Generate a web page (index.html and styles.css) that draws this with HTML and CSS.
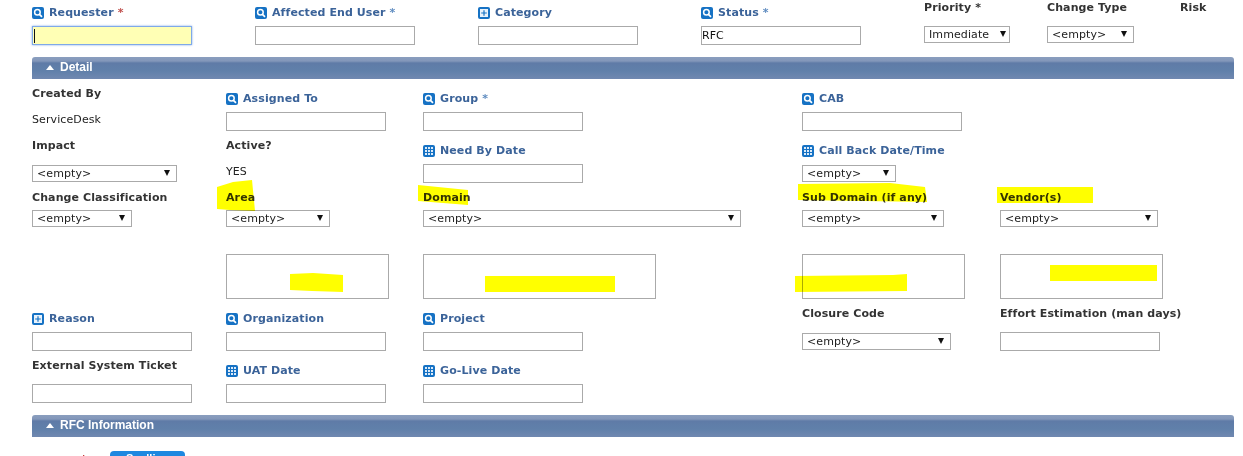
FILE: index.html
```html
<!DOCTYPE html>
<html lang="en">
<head>
<meta charset="utf-8">
<title>Change</title>
<link rel="stylesheet" href="styles.css">
</head>
<body>
<svg class="defs" width="0" height="0" aria-hidden="true">
  <symbol id="i-search" viewBox="0 0 12 12">
    <rect width="12" height="12" rx="2" fill="#1672c4"/>
    <circle cx="5.4" cy="5.2" r="2.8" fill="none" stroke="#fff" stroke-width="1.5"/>
    <path d="M7.4 7.3 10 9.8" stroke="#fff" stroke-width="1.7"/>
  </symbol>
  <symbol id="i-plus" viewBox="0 0 12 12">
    <rect width="12" height="12" rx="2" fill="#1672c4"/>
    <rect x="2" y="2" width="8" height="8" fill="#e8f2fb"/>
    <path d="M6 3.2v5.6M3.2 6h5.6" stroke="#1672c4" stroke-width="1.2"/>
  </symbol>
  <symbol id="i-grid" viewBox="0 0 12 12">
    <rect width="12" height="12" rx="2" fill="#1672c4"/>
    <path d="M2 2h2v2H2zM5 2h2v2H5zM8 2h2v2H8zM2 5h2v2H2zM5 5h2v2H5zM8 5h2v2H8zM2 8h2v2H2zM5 8h2v2H5zM8 8h2v2H8z" fill="#dcebf9"/>
  </symbol>
</svg>

<main class="page">
  <section class="top">
    <div class="field"><div class="lbl link"><svg class="ic"><use href="#i-search"/></svg>Requester <i class="req">*</i></div><input class="in focus" type="text"></div>
    <div class="field"><div class="lbl link"><svg class="ic"><use href="#i-search"/></svg>Affected End User <i>*</i></div><input class="in" type="text"></div>
    <div class="field"><div class="lbl link"><svg class="ic"><use href="#i-plus"/></svg>Category</div><input class="in" type="text"></div>
    <div class="field"><div class="lbl link"><svg class="ic"><use href="#i-search"/></svg>Status <i>*</i></div><input class="in" type="text" value="RFC"></div>
    <div class="field"><div class="lbl">Priority <i class="dark">*</i></div><div class="sel w86 tight"><select><option>Immediate</option></select></div></div>
    <div class="field"><div class="lbl">Change Type</div><div class="sel w87"><select><option>&lt;empty&gt;</option></select></div></div>
    <div class="field"><div class="lbl">Risk</div></div>
  </section>

  <h2 class="bar">Detail</h2>

  <section class="detail">
    <div class="field"><div class="lbl">Created By</div><div class="val">ServiceDesk</div></div>
    <div class="field"><div class="lbl link"><svg class="ic"><use href="#i-search"/></svg>Assigned To</div><input class="in" type="text"></div>
    <div class="field"><div class="lbl link"><svg class="ic"><use href="#i-search"/></svg>Group <i>*</i></div><input class="in" type="text"></div>
    <div class="field"><div class="lbl link"><svg class="ic"><use href="#i-search"/></svg>CAB</div><input class="in" type="text"></div>
    <div></div>

    <div class="field"><div class="lbl tall">Impact</div><div class="sel w145"><select><option>&lt;empty&gt;</option></select></div></div>
    <div class="field"><div class="lbl">Active?</div><div class="val">YES</div></div>
    <div class="field"><div class="lbl link"><svg class="ic"><use href="#i-grid"/></svg>Need By Date</div><input class="in" type="text"></div>
    <div class="field"><div class="lbl link tall"><svg class="ic"><use href="#i-grid"/></svg>Call Back Date/Time</div><div class="sel w94"><select><option>&lt;empty&gt;</option></select></div></div>
    <div></div>

    <div class="field"><div class="lbl short">Change Classification</div><div class="sel w100"><select><option>&lt;empty&gt;</option></select></div></div>
    <div class="field"><div class="lbl short">Area</div><div class="sel w104"><select><option>&lt;empty&gt;</option></select></div></div>
    <div class="field"><div class="lbl short">Domain</div><div class="sel w318"><select><option>&lt;empty&gt;</option></select></div></div>
    <div class="field"><div class="lbl short">Sub Domain (if any)</div><div class="sel w142"><select><option>&lt;empty&gt;</option></select></div></div>
    <div class="field"><div class="lbl short">Vendor(s)</div><div class="sel w158"><select><option>&lt;empty&gt;</option></select></div></div>

    <div></div>
    <textarea class="box w163"></textarea>
    <textarea class="box w233"></textarea>
    <textarea class="box w163"></textarea>
    <textarea class="box w163"></textarea>

    <div class="field"><div class="lbl link"><svg class="ic"><use href="#i-plus"/></svg>Reason</div><input class="in" type="text"></div>
    <div class="field"><div class="lbl link"><svg class="ic"><use href="#i-search"/></svg>Organization</div><input class="in" type="text"></div>
    <div class="field"><div class="lbl link"><svg class="ic"><use href="#i-search"/></svg>Project</div><input class="in" type="text"></div>
    <div class="field"><div class="lbl tall">Closure Code</div><div class="sel w149"><select><option>&lt;empty&gt;</option></select></div></div>
    <div class="field"><div class="lbl">Effort Estimation (man days)</div><input class="in" type="text"></div>

    <div class="field"><div class="lbl">External System Ticket</div><input class="in" type="text"></div>
    <div class="field"><div class="lbl link"><svg class="ic"><use href="#i-grid"/></svg>UAT Date</div><input class="in" type="text"></div>
    <div class="field"><div class="lbl link"><svg class="ic"><use href="#i-grid"/></svg>Go-Live Date</div><input class="in" type="text"></div>
  </section>

  <h2 class="bar bar-rfc">RFC Information</h2>

  <div class="actions"><span class="mark">*</span><button class="btn" type="button">Spelling</button></div>
</main>

<svg class="marks" viewBox="0 0 1243 456" aria-hidden="true">
  <g fill="#ffff00">
    <polygon points="217,187 233,182 252,180 255,211 230,210 217,209"/>
    <polygon points="290,274 313,273 343,275 343,292 312,291 290,290"/>
    <polygon points="418,185 468,190 468,205 418,201"/>
    <polygon points="485,276 615,276 615,292 485,292"/>
    <polygon points="798,184 890,183 925,187 927,202 798,200"/>
    <polygon points="795,276 893,275 907,274 907,291 795,292"/>
    <polygon points="997,187 1093,187 1093,203 997,203"/>
    <polygon points="1050,265 1157,265 1157,281 1050,281"/>
  </g>
</svg>
</body>
</html>
```
FILE: styles.css
```css
html, body {
  margin: 0;
  padding: 0;
  height: 456px;
  overflow: hidden;
  background: #fff;
}
body {
  position: relative;
  font: 11px/14px "DejaVu Sans", Verdana, sans-serif;
  letter-spacing: 0.1px;
  color: #222;
}
.defs { position: absolute; }
.page { padding-left: 32px; width: 1202px; }

.top {
  display: grid;
  grid-template-columns: 223px 223px 223px 223px 123px 133px 1fr;
  height: 57px;
}
.detail {
  display: grid;
  grid-template-columns: 194px 197px 379px 198px 1fr;
  grid-template-rows: 52px 52px 64px 52px 52px 57px;
  padding-top: 7px;
  height: 336px;
  box-sizing: border-box;
  align-items: start;
}

.field { display: flex; flex-direction: column; align-items: flex-start; }

.lbl {
  height: 26px;
  box-sizing: border-box;
  padding-top: 1px;
  font-weight: bold;
  color: #333;
  white-space: nowrap;
}
.lbl i { font-style: normal; }
.lbl.tall { height: 27px; }
.lbl.short { height: 20px; }
.link { padding-top: 6px; color: #3b6399; display: flex; align-items: center; height: 26px; padding-bottom: 6px; }
.link.tall { height: 27px; padding-bottom: 7px; }
.link i { color: #5f8cc0; margin-left: 4px; }
.link i.req { color: #c0504d; }
.dark { color: #333; }
.ic { width: 12px; height: 12px; margin-right: 5px; flex: none; }

.val { padding-top: 1px; color: #222; line-height: 14px; }

.in {
  width: 160px;
  height: 19px;
  box-sizing: border-box;
  border: 1px solid #aaa;
  padding: 0;
  margin: 0;
  font: 11px "DejaVu Sans", Verdana, sans-serif;
  color: #111;
  background: #fff;
  outline: none;
  display: block;
}
.in.focus {
  background: linear-gradient(#111, #111) 1px 2px / 1px 14px no-repeat, #ffffb5;
  border-color: #7fa9e8;
  box-shadow: 0 0 2px #7fa9e8;
}

.sel { position: relative; height: 17px; }
.sel select {
  appearance: none;
  -webkit-appearance: none;
  width: 100%;
  height: 17px;
  box-sizing: border-box;
  border: 1px solid #aaa;
  border-radius: 0;
  background: #fff;
  padding: 0 0 0 4px;
  margin: 0;
  font: 11px "DejaVu Sans", Verdana, sans-serif;
  letter-spacing: 0.1px;
  color: #222;
  display: block;
}
.sel::after {
  content: "";
  position: absolute;
  right: 7px;
  top: 5px;
  border-left: 3px solid transparent;
  border-right: 3px solid transparent;
  border-top: 6px solid #111;
}
.sel.tight::after { right: 4px; }
.w86 { width: 86px; }
.w87 { width: 87px; }
.w94 { width: 94px; }
.w100 { width: 100px; }
.w104 { width: 104px; }
.w142 { width: 142px; }
.w145 { width: 145px; }
.w149 { width: 149px; }
.w158 { width: 158px; }
.w318 { width: 318px; }

.box {
  display: block;
  height: 45px;
  box-sizing: border-box;
  border: 1px solid #aaa;
  margin: 0;
  padding: 0;
  resize: none;
  background: #fff;
  outline: none;
}
.w163 { width: 163px; }
.w233 { width: 233px; }

.bar {
  position: relative;
  margin: 0;
  height: 22px;
  box-sizing: border-box;
  padding-left: 28px;
  font: bold 12px/21px "Liberation Sans", Arial, sans-serif;
  letter-spacing: 0;
  color: #fff;
  background: linear-gradient(#8a9ebe 0, #8397ba 4px, #5f7ba7 6px, #6080aa 14px, #7088b0 22px);
  border-radius: 3px 3px 0 0;
}
.bar::before {
  content: "";
  position: absolute;
  left: 14px;
  top: 8px;
  border-left: 4.5px solid transparent;
  border-right: 4.5px solid transparent;
  border-bottom: 5px solid #fff;
}

.actions { display: flex; align-items: flex-start; padding: 14px 0 0 48px; }
.mark {
  width: 30px;
  margin-top: 2px;
  color: #c03030;
  font: bold 14px/14px "DejaVu Sans", Verdana, sans-serif;
}
.btn {
  display: block;
  width: 75px;
  height: 22px;
  padding: 0 0 8px;
  border: 0;
  border-radius: 4px;
  background: #1e88e0;
  color: #fff;
  font: bold 11px/14px "Liberation Sans", Arial, sans-serif;
}

.marks {
  position: absolute;
  left: 0;
  top: 0;
  width: 1243px;
  height: 456px;
  mix-blend-mode: multiply;
  pointer-events: none;
}
```
